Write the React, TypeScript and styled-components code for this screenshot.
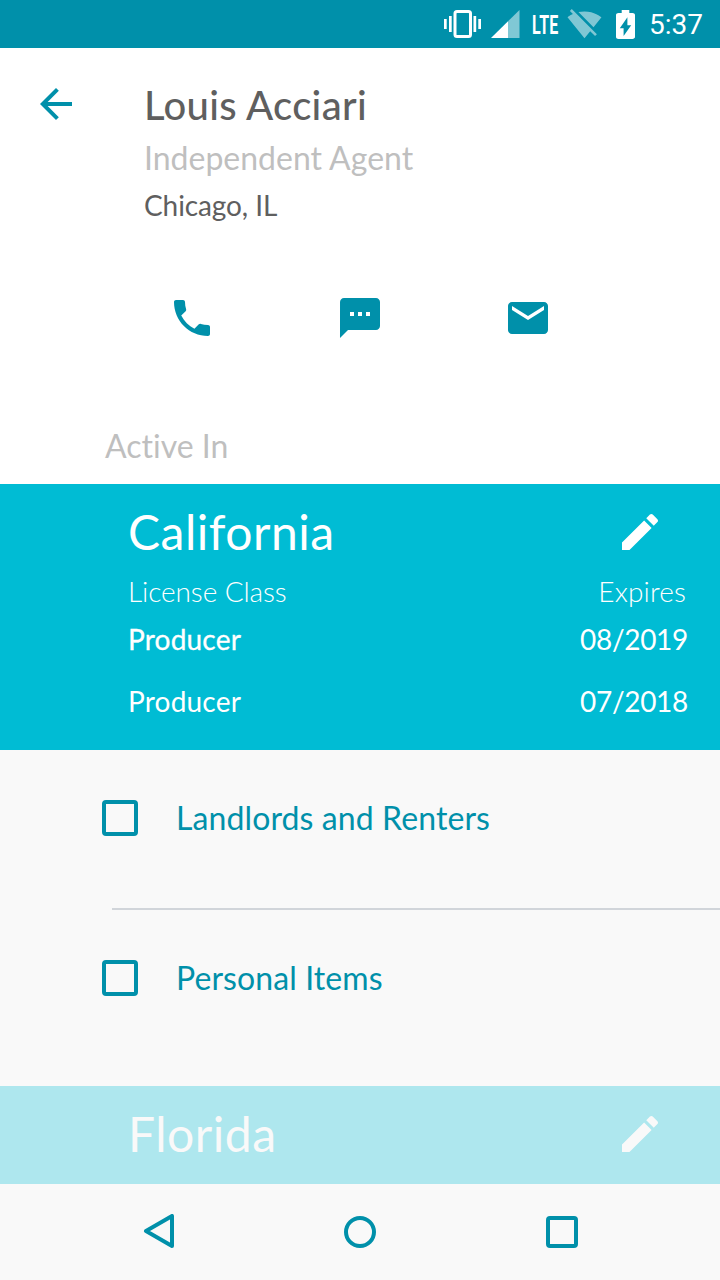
import React from "react";
import styled, { createGlobalStyle } from "styled-components";

const teal = "#0090aa";
const cyan = "#00bcd4";
const surface = "#f9f9f9";

const GlobalStyle = createGlobalStyle`
  * { box-sizing: border-box; }
  body { margin: 0; background: #fff; font-family: Lato, sans-serif; font-variant-ligatures: none; }
  svg { display: block; flex: none; }
  h1, h2, p { margin: 0; font-weight: 400; }
`;

const Screen = styled.div`
  display: flex;
  flex-direction: column;
  width: 720px;
  height: 1280px;
  overflow: hidden;
  background: #fff;
`;

const IconButton = styled.button`
  display: block;
  flex: none;
  width: 48px;
  height: 48px;
  margin: 0;
  padding: 0;
  border: 0;
  background: none;
  color: inherit;
`;

const StatusBar = styled.header`
  display: flex;
  flex: none;
  align-items: center;
  justify-content: flex-end;
  height: 48px;
  padding-right: 17px;
  background: ${teal};
  color: #fff;
`;

const NetworkType = styled.span`
  width: 27px;
  margin: 3px 8px 0 12px;
  font: 700 25px/30px Roboto, sans-serif;
  letter-spacing: 0.4px;
  transform: scaleX(0.64);
  transform-origin: left center;
`;

const Clock = styled.span`
  margin: 2px 0 0 14px;
  font: 400 28px/34px Roboto, sans-serif;
`;

const Profile = styled.section`
  display: flex;
  flex: none;
  align-items: flex-start;
  height: 246px;
  padding: 32px 32px 0;
  color: ${teal};
`;

const ProfileText = styled.div`
  margin-left: 64px;
`;

const Name = styled.h1`
  margin-top: 1px;
  color: #5f5f5f;
  font-size: 40px;
  font-weight: 500;
  letter-spacing: 0.3px;
  line-height: 48px;
`;

const Role = styled.p`
  margin-top: 9px;
  color: #bfbfbf;
  font-size: 32px;
  line-height: 40px;
`;

const Location = styled.p`
  margin-top: 9px;
  color: #5f5f5f;
  font-size: 28px;
  letter-spacing: -0.1px;
  line-height: 36px;
`;

const ContactActions = styled.nav`
  display: flex;
  flex: none;
  gap: 120px;
  height: 132px;
  padding-left: 168px;
  color: ${teal};
`;

const SectionLabel = styled.p`
  flex: none;
  height: 58px;
  padding-left: 105px;
  color: #bfbfbf;
  font-size: 32px;
  line-height: 40px;
`;

const StateCard = styled.section<{ $height: number; $faded?: boolean }>`
  flex: none;
  height: ${(p) => p.$height}px;
  padding: 20px 32px 0 128px;
  background: ${(p) => (p.$faded ? "#aee7ee" : cyan)};
  color: ${(p) => (p.$faded ? surface : "#fff")};
`;

const CardHeader = styled.div`
  display: flex;
  align-items: flex-start;
  justify-content: space-between;
  height: 69px;
  padding: 0 24px 0 0;

  ${IconButton} { margin-top: 4px; }
`;

const StateName = styled.h2`
  font-size: 48px;
  letter-spacing: 0.5px;
  line-height: 56px;
`;

const LicenseLabels = styled.div`
  display: flex;
  justify-content: space-between;
  margin-bottom: 12px;
  padding-right: 2px;
  font-size: 28px;
  font-weight: 300;
  letter-spacing: -0.1px;
  line-height: 36px;

  span:last-child { letter-spacing: 0.15px; }
`;

const LicenseRow = styled.div`
  display: flex;
  justify-content: space-between;
  margin-bottom: 26px;
  font-size: 28px;
  letter-spacing: 0.2px;
  line-height: 36px;
`;

const LicenseClass = styled.span<{ $strong?: boolean }>`
  -webkit-text-stroke: ${(p) => (p.$strong ? "0.3px" : "0")} currentColor;
`;

const LicenseDate = styled.span`
  letter-spacing: -0.3px;
`;

const CoverageList = styled.div`
  flex: none;
  height: 336px;
  background: ${surface};
`;

const CoverageRow = styled.label`
  display: flex;
  align-items: flex-start;
  height: 158px;
  padding: 50px 0 0 102px;
  color: ${teal};
  font-size: 32px;
  letter-spacing: 0.1px;
  line-height: 40px;

  span { margin: -2px 0 0 38px; }
`;

const Checkbox = styled.input`
  appearance: none;
  width: 36px;
  height: 36px;
  margin: 0;
  border: 4px solid ${teal};
  border-radius: 4px;
`;

const Divider = styled.div`
  height: 2px;
  margin-left: 112px;
  background: #d1d5da;
`;

const SystemNav = styled.nav`
  display: flex;
  flex: none;
  align-items: center;
  justify-content: space-between;
  height: 96px;
  padding: 0 142px;
  background: ${surface};
  color: ${teal};
`;

const Glyph = ({ d }: { d: string }) => (
  <svg width="48" height="48" viewBox="0 0 24 24" fill="currentColor">
    <path d={d} />
  </svg>
);

const icons = {
  back: "M20 11H7.83l5.59-5.59L12 4l-8 8 8 8 1.41-1.41L7.83 13H20v-2z",
  phone:
    "M6.62 10.79c1.44 2.83 3.76 5.14 6.59 6.59l2.2-2.2c.27-.27.67-.36 1.02-.24 1.12.37 2.33.57 3.57.57.55 0 1 .45 1 1V20c0 .55-.45 1-1 1-9.39 0-17-7.61-17-17 0-.55.45-1 1-1h3.5c.55 0 1 .45 1 1 0 1.25.2 2.45.57 3.57.11.35.03.74-.25 1.02l-2.2 2.2z",
  message:
    "M20 2H4c-1.1 0-1.99.9-1.99 2L2 22l4-4h14c1.1 0 2-.9 2-2V4c0-1.1-.9-2-2-2zM9 11H7V9h2v2zm4 0h-2V9h2v2zm4 0h-2V9h2v2z",
  mail: "M20 4H4c-1.1 0-1.99.9-1.99 2L2 18c0 1.1.9 2 2 2h16c1.1 0 2-.9 2-2V6c0-1.1-.9-2-2-2zm0 4l-8 5-8-5V6l8 5 8-5v2z",
  edit: "M3 17.25V21h3.75L17.81 9.94l-3.75-3.75L3 17.25zM20.71 7.04c.39-.39.39-1.02 0-1.41l-2.34-2.34c-.39-.39-1.02-.39-1.41 0l-1.83 1.83 3.75 3.75 1.83-1.83z",
};

const VibrateIcon = () => (
  <svg width="38" height="28" viewBox="0 0 38 28" fill="currentColor">
    <rect x="0" y="9" width="2.7" height="10" />
    <rect x="5" y="6" width="2.7" height="16" />
    <rect x="11" y="1.5" width="15.5" height="25" rx="2" fill="none" stroke="currentColor" strokeWidth="3" />
    <rect x="29.5" y="6" width="2.7" height="16" />
    <rect x="34.3" y="9" width="2.7" height="10" />
  </svg>
);

const SignalIcon = () => (
  <svg width="29" height="28" viewBox="0 0 29 28" fill="currentColor">
    <path d="M17 11.3L28.5 0V28H17Z" opacity=".5" />
    <path d="M0 28L17 11.3V28Z" />
  </svg>
);

const WifiOffIcon = () => (
  <svg width="35" height="35" viewBox="0 0 24 24" fill="currentColor" opacity=".5">
    <path d="M23.64 7c-.45-.34-4.93-4-11.64-4-1.5 0-2.89.19-4.15.48L18.18 13.8 23.64 7zm-6.6 8.22L3.27 1.44 2 2.72l2.05 2.06C1.91 5.76.59 6.82.36 7l11.63 14.49.01.01.01-.01 3.9-4.86 3.32 3.32 1.27-1.27-3.46-3.46z" />
  </svg>
);

const BatteryIcon = () => (
  <svg width="19" height="29" viewBox="7 2 10 20" preserveAspectRatio="none" fill="currentColor">
    <path d="M15.67 4H14V2h-4v2H8.33C7.6 4 7 4.6 7 5.33v15.33C7 21.4 7.6 22 8.33 22h7.33c.74 0 1.34-.6 1.34-1.33V5.33C17 4.6 16.4 4 15.67 4zM11 20v-5.5H9L13 7v5.5h2L11 20z" />
  </svg>
);

const StatusSlot = styled.span<{ $gap: number }>`
  display: block;
  margin-left: ${(p) => p.$gap}px;
`;

export default function App() {
  return (
    <Screen>
      <GlobalStyle />
      <StatusBar>
        <VibrateIcon />
        <StatusSlot $gap={9}><SignalIcon /></StatusSlot>
        <NetworkType>LTE</NetworkType>
        <WifiOffIcon />
        <StatusSlot $gap={14}><BatteryIcon /></StatusSlot>
        <Clock>5:37</Clock>
      </StatusBar>

      <Profile>
        <IconButton aria-label="Back"><Glyph d={icons.back} /></IconButton>
        <ProfileText>
          <Name>Louis Acciari</Name>
          <Role>Independent Agent</Role>
          <Location>Chicago, IL</Location>
        </ProfileText>
      </Profile>

      <ContactActions>
        <IconButton aria-label="Call"><Glyph d={icons.phone} /></IconButton>
        <IconButton aria-label="Message"><Glyph d={icons.message} /></IconButton>
        <IconButton aria-label="Email"><Glyph d={icons.mail} /></IconButton>
      </ContactActions>

      <SectionLabel>Active In</SectionLabel>

      <StateCard $height={266}>
        <CardHeader>
          <StateName>California</StateName>
          <IconButton aria-label="Edit"><Glyph d={icons.edit} /></IconButton>
        </CardHeader>
        <LicenseLabels><span>License Class</span><span>Expires</span></LicenseLabels>
        <LicenseRow><LicenseClass $strong>Producer</LicenseClass><LicenseDate>08/2019</LicenseDate></LicenseRow>
        <LicenseRow><LicenseClass>Producer</LicenseClass><LicenseDate>07/2018</LicenseDate></LicenseRow>
      </StateCard>

      <CoverageList>
        <CoverageRow><Checkbox type="checkbox" /><span>Landlords and Renters</span></CoverageRow>
        <Divider />
        <CoverageRow><Checkbox type="checkbox" /><span>Personal Items</span></CoverageRow>
      </CoverageList>

      <StateCard $height={98} $faded>
        <CardHeader>
          <StateName>Florida</StateName>
          <IconButton aria-label="Edit"><Glyph d={icons.edit} /></IconButton>
        </CardHeader>
      </StateCard>

      <SystemNav>
        <svg width="32" height="36" viewBox="0 0 32 36" fill="none" stroke="currentColor" strokeWidth="4" strokeLinejoin="round">
          <path d="M4 17L30 2V32Z" />
        </svg>
        <svg width="32" height="32" viewBox="0 0 32 32" fill="none" stroke="currentColor" strokeWidth="4">
          <circle cx="16" cy="16" r="14" />
        </svg>
        <svg width="32" height="32" viewBox="0 0 32 32" fill="none" stroke="currentColor" strokeWidth="4">
          <rect x="2" y="2" width="28" height="28" rx="2" />
        </svg>
      </SystemNav>
    </Screen>
  );
}
